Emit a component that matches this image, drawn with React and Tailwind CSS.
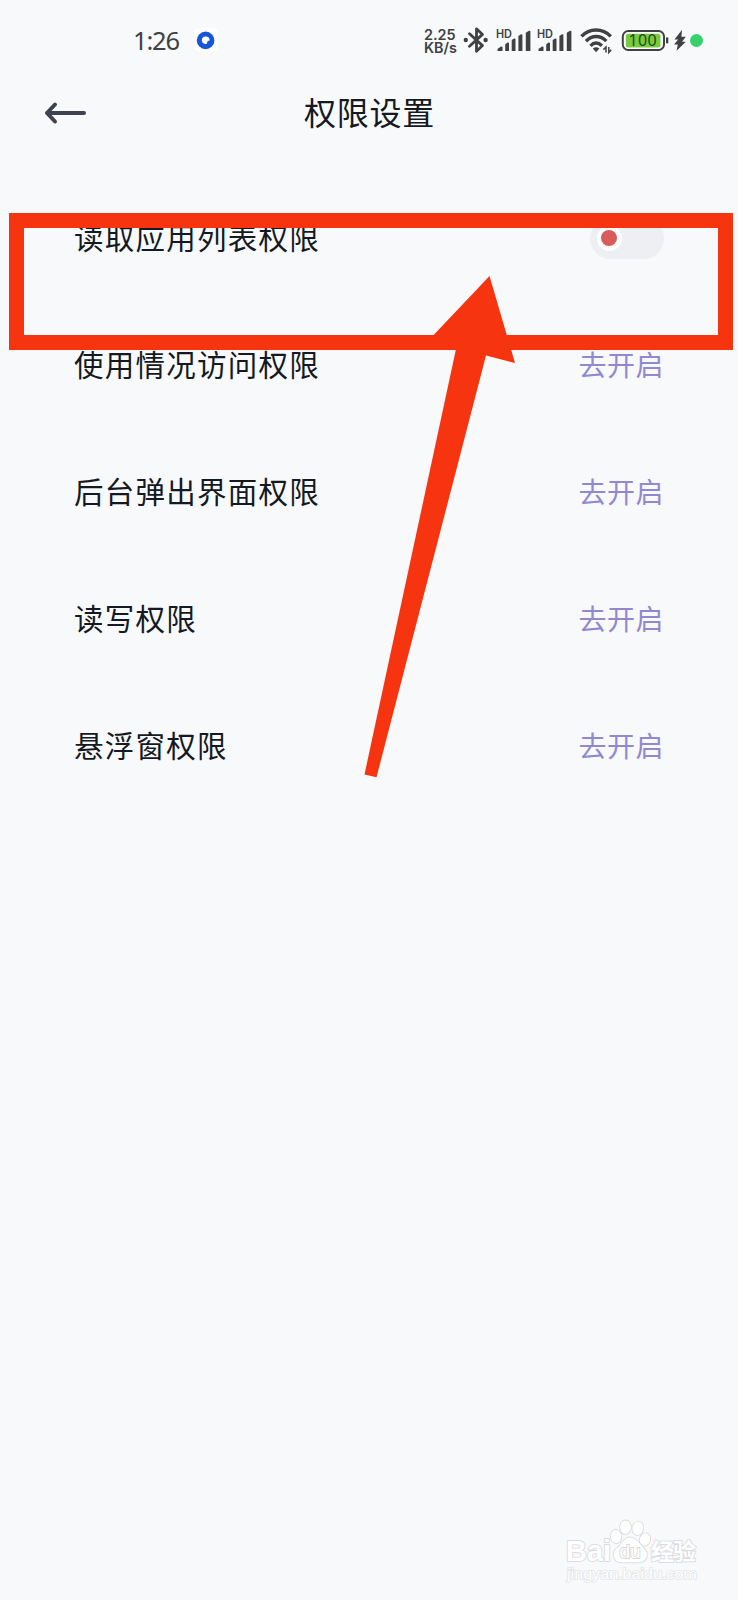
const cjk = "font-['Noto_Sans_CJK_SC',sans-serif]";

const permissions = [
  { name: "读取应用列表权限", toggle: true },
  { name: "使用情况访问权限" },
  { name: "后台弹出界面权限" },
  { name: "读写权限" },
  { name: "悬浮窗权限" },
];

function Bluetooth() {
  return (
    <svg className="ml-[5px] h-[30px] w-[28px] shrink-0" viewBox="0 0 28 30" fill="none" stroke="#404143" strokeWidth="2.8" strokeLinejoin="round" strokeLinecap="round">
      <path d="M6.5 8.8 L19.5 20.6 L13.5 26.2 V3.8 L19.5 9.4 L6.5 21.2" />
      <circle cx="2.8" cy="15" r="2.2" fill="#404143" stroke="none" />
      <circle cx="22.6" cy="15" r="2.2" fill="#404143" stroke="none" />
    </svg>
  );
}

function Signal() {
  return (
    <svg className="h-[30px] w-[36px] shrink-0" viewBox="0 0 36 30">
      <text x="0" y="12.8" fontFamily="Inter, sans-serif" fontSize="11.4" fontWeight="600" textLength="16" lengthAdjust="spacingAndGlyphs" fill="#404143">HD</text>
      <g fill="#404143">
        <path d="M1.5 26 V24 L5 21.6 Q6.5 21 6.5 22.5 V26 Z" />
        <path d="M9.2 26 V19.2 L11.6 17.6 Q13 17.2 13 18.6 V26 Z" />
        <path d="M15.7 26 V15 L18.1 13.5 Q19.5 13.1 19.5 14.5 V26 Z" />
        <path d="M22.4 26 V11 L25 9.3 Q26.4 8.9 26.4 10.3 V26 Z" />
        <path d="M29.8 26 V7.7 L33 5.8 Q34.4 5.2 34.4 6.7 V26 Z" />
      </g>
    </svg>
  );
}

function Wifi() {
  return (
    <svg className="ml-[7px] h-[30px] w-[34px] shrink-0" viewBox="0 0 34 30" fill="none" stroke="#404143" strokeWidth="3.4">
      <path d="M1.5 11.4 C9.5 2.8 22.5 2.8 30.8 11.4" />
      <path d="M6 16.2 C12 10 20.5 10 26.3 16.2" />
      <path d="M10.5 20.8 C14 17.1 18.2 17.1 21.8 20.8" />
      <path d="M12.8 23.6 Q16 21 19.4 23.6 L16 27.2 Z" fill="#404143" stroke="none" />
      <path d="M26 27.5 V22 L23.4 24.6 M28.8 22 V27.5 L31.2 24.8" strokeWidth="1.5" />
    </svg>
  );
}

function Battery() {
  return (
    <svg className="ml-[7px] h-[30px] w-[48px] shrink-0" viewBox="0 0 48 30">
      <rect x="1.8" y="6" width="41.2" height="19" rx="5.5" fill="#fff" stroke="#404143" strokeWidth="2" />
      <rect x="4.8" y="8.8" width="34.7" height="13.6" rx="2.5" fill="#78ca3e" />
      <text x="7.6" y="21" fontFamily="Noto Sans, sans-serif" fontSize="16" textLength="28" fill="#234b17">100</text>
      <rect x="45" y="12.3" width="2.3" height="6.2" rx="1" fill="#404143" />
    </svg>
  );
}

function StatusBar() {
  return (
    <div className="flex h-20 items-center pl-[133px] text-[#404143]">
      <div className="w-[47px] text-[25.5px] leading-[30px] tracking-[-1.2px] whitespace-nowrap font-['Noto_Sans',sans-serif]">1:26</div>
      <svg className="ml-[14px] h-[24px] w-[24px] shrink-0" viewBox="0 0 24 24">
        <rect width="24" height="24" rx="5" fill="#fff" />
        <circle cx="11.6" cy="12.4" r="8.8" fill="#1756d6" />
        <path d="M7.8 12.4 A3.9 3.9 0 1 1 15.6 12.6 Q13.2 12.6 12.8 15.8 A3.9 3.9 0 0 1 7.8 12.4" fill="#fff" />
      </svg>
      <div className="ml-[206px] w-[34px] pt-[3px] text-[14.4px] leading-[12.6px] font-semibold whitespace-pre-line font-['Inter',sans-serif]">{"2.25\nKB/s"}</div>
      <Bluetooth />
      <div className="ml-[5px] flex gap-[5px]">
        <Signal />
        <Signal />
      </div>
      <Wifi />
      <Battery />
      <svg className="ml-[4px] h-[30px] w-[14px] shrink-0" viewBox="0 0 14 30">
        <path d="M9 4.8 L1.5 14.5 H5.2 L1 19.5 H4.8 L3.6 25.8 L12.8 16.8 H9 L12.8 11.8 H8.4 Z" fill="#404143" />
      </svg>
      <div className="ml-[3px] size-[13px] shrink-0 rounded-full bg-[#35d26a]" />
    </div>
  );
}

function Toggle() {
  return (
    <div className="mb-px flex h-[41px] w-[74px] items-center rounded-full bg-[#eeeff3] pl-[6.5px]">
      <div className="flex size-[25px] items-center justify-center rounded-full bg-white">
        <div className="size-[16.5px] rounded-full bg-[#d95b5a]" />
      </div>
    </div>
  );
}

function Watermark() {
  const outlined = { fill: "#fff", stroke: "#dadcdf", strokeWidth: 1.8, paintOrder: "stroke" };
  return (
    <svg className="absolute top-[1515px] left-[560px] h-[75px] w-[145px]" viewBox="0 0 145 75">
      <g {...outlined}>
        <text x="6" y="46.3" fontFamily="Liberation Sans, sans-serif" fontWeight="700" fontSize="29" textLength="45" lengthAdjust="spacingAndGlyphs">Bai</text>
        <ellipse cx="56" cy="21.5" rx="5.2" ry="6.6" transform="rotate(-8 56 21.5)" />
        <ellipse cx="65.5" cy="12.3" rx="5.4" ry="6.8" />
        <ellipse cx="77.8" cy="13.3" rx="5.3" ry="6.8" transform="rotate(10 77.8 13.3)" />
        <ellipse cx="85" cy="24.5" rx="5.1" ry="6.2" transform="rotate(15 85 24.5)" />
        <path d="M70 22.5 C75 22.5 78 27 81 30 C86 35 88 38 86.5 42 C84 49 77 47.2 70 47.2 C63 47.2 56 49 54 42 C52.5 37 56 34 60 30 C63 27 65 22.5 70 22.5 Z" />
        <text x="91" y="44.5" fontFamily="Noto Sans CJK SC, sans-serif" fontWeight="700" fontSize="23" textLength="45">经验</text>
      </g>
      <text x="59.5" y="43" fontFamily="Liberation Sans, sans-serif" fontWeight="400" fontSize="19" textLength="21" fill="#fff" stroke="#d6d8db" strokeWidth="1.8" paintOrder="stroke">du</text>
      <text x="7" y="63.5" fontFamily="Liberation Sans, sans-serif" fontSize="15.5" textLength="130" lengthAdjust="spacingAndGlyphs" fill="#fff" stroke="#e3e5e8" strokeWidth="1.5" paintOrder="stroke">jingyan.baidu.com</text>
    </svg>
  );
}

function Highlight() {
  return (
    <>
      <div className="absolute top-[213px] left-[9px] h-[137px] w-[724px] border-[15px] border-[#f63410]" />
      <svg className="absolute top-[270px] left-[350px] h-[520px] w-[180px]" viewBox="350 270 180 520">
        <path d="M489.5 276 L515 363 L486 355.5 L376.5 777.3 L364.5 774.5 L457.5 342 L427 342 Z" fill="#f63410" />
      </svg>
    </>
  );
}

export default function App() {
  return (
    <div className="relative h-[1600px] w-[738px] overflow-hidden bg-[#f7f9fa]">
      <StatusBar />
      <header className="grid h-[66px] grid-cols-[1fr_auto_1fr] items-center pl-[44px]">
        <svg className="h-[24px] w-[43px]" viewBox="0 0 43 24" fill="none" stroke="#3f4253" strokeWidth="4" strokeLinecap="round" strokeLinejoin="round">
          <path d="M40 12 H3 M11 3.5 L3 12 L11 20.5" />
        </svg>
        <h1 className={`-ml-[43px] pb-[5px] text-[32px] leading-[40px] tracking-[0.8px] text-[#151923] ${cjk}`}>权限设置</h1>
      </header>
      <main className="flex flex-col pt-[29px] pr-[74px] pl-[74px]">
        {permissions.map((p) => (
          <div key={p.name} className="flex h-[127px] items-center justify-between">
            <span className={`pb-[6px] text-[29.5px] leading-[40px] tracking-[1.25px] text-[#151923] ${cjk}`}>{p.name}</span>
            {p.toggle ? (
              <Toggle />
            ) : (
              <span className={`pb-[4px] text-[28px] leading-[40px] tracking-[0.5px] text-[#9288d2] ${cjk}`}>去开启</span>
            )}
          </div>
        ))}
      </main>
      <Highlight />
      <Watermark />
    </div>
  );
}
